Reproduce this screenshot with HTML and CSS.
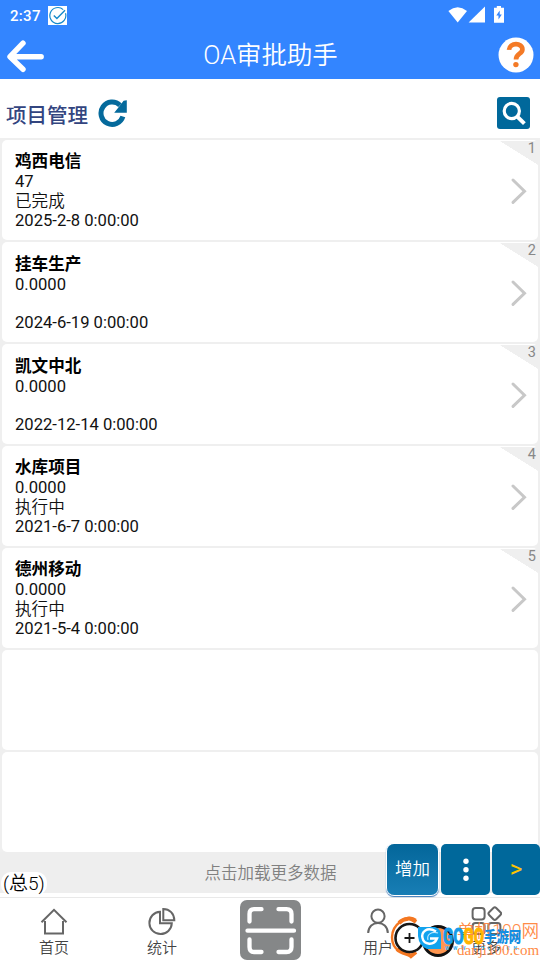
FILE: index.html
```html
<!DOCTYPE html>
<html lang="zh-CN">
<head>
    <meta charset="UTF-8">
    <meta name="viewport" content="width=device-width, initial-scale=1.0">
    <title>OA审批助手</title>
    <link rel="stylesheet" href="styles.css">
</head>
<body>
    <div class="app">
        <header class="header">
            <div class="status-bar">
                <span class="time">2:37</span>
                <svg class="app-badge" width="19" height="19" viewBox="0 0 19 19" fill="none" stroke="#168acb">
                    <rect width="19" height="19" fill="#fff" stroke="none"/>
                    <path d="M17.5 7.2A8 8 0 1 1 15.2 3.6" stroke-width="1.2"/>
                    <path d="M5.8 9.5l3.1 3L17 4.3" stroke-width="1.4"/>
                </svg>
                <svg class="signals" width="58" height="18" viewBox="0 0 58 18" fill="#fff">
                    <path d="M1.4 5Q10.7 -2.4 20 5L10.7 16.4z"/>
                    <path d="M38 .5V16.6H21.6z"/>
                    <path d="M47 1.7h2.8V0h4.2v1.7H57v15.1H47V2.7z"/>
                    <path d="M52.700 4.600l-3.400 5h2.200v4l3.300-5.200h-2.100z" fill="#3385ff"/>
                </svg>
            </div>
            <div class="title-bar">
                <svg class="back" width="38" height="34" viewBox="0 0 38 34" fill="none" stroke="#fff" stroke-width="5.4" stroke-linecap="round" stroke-linejoin="round">
                    <path d="M16 3.2L3 16.7 16 29.3M3.5 16.7h30.7"/>
                </svg>
                <h1>OA审批助手</h1>
                <svg class="help" width="36" height="36" viewBox="0 0 36 36">
                    <circle cx="18" cy="18" r="17.5" fill="#fff"/>
                    <path d="M11 12.9C11.6 5.4 24.4 5.4 24.4 12.4C24.4 17 18 16.6 18 22.6" fill="none" stroke="#f47a26" stroke-width="4.7"/>
                    <circle cx="17.9" cy="27.6" r="2.7" fill="#f47a26"/>
                </svg>
            </div>
        </header>

        <div class="toolbar">
            <h2>项目管理</h2>
            <svg class="refresh" width="30" height="30" viewBox="0 0 30 30" fill="none">
                <path d="M22 7.2A11.2 11.2 0 1 0 24.900 18.600" stroke="#056a9c" stroke-width="5"/>
                <path d="M28.800 2.300v12.400H16.200l3.400-4.200 6-7.700z" fill="#056a9c"/>
            </svg>
            <button class="search">
                <svg width="33" height="32" viewBox="0 0 33 32" fill="none" stroke="#fff">
                    <circle cx="14.8" cy="14" r="7.6" stroke-width="3.2"/>
                    <path d="M20 19.4l7.4 7.2" stroke-width="4"/>
                </svg>
            </button>
        </div>

        <main class="list">
            <div class="card">
                <div class="name">鸡西电信</div>
                <div class="line">47</div>
                <div class="line state">已完成</div>
                <div class="line">2025-2-8 0:00:00</div>
                <span class="corner"><b>1</b></span>
                <svg class="arrow" width="18" height="28" viewBox="0 0 18 28"><path d="M3 3l11.5 11.2L3 25.4"/></svg>
            </div>
            <div class="card empty-state">
                <div class="name">挂车生产</div>
                <div class="line">0.0000</div>
                <div class="line state"></div>
                <div class="line">2024-6-19 0:00:00</div>
                <span class="corner"><b>2</b></span>
                <svg class="arrow" width="18" height="28" viewBox="0 0 18 28"><path d="M3 3l11.5 11.2L3 25.4"/></svg>
            </div>
            <div class="card empty-state">
                <div class="name">凯文中北</div>
                <div class="line">0.0000</div>
                <div class="line state"></div>
                <div class="line">2022-12-14 0:00:00</div>
                <span class="corner"><b>3</b></span>
                <svg class="arrow" width="18" height="28" viewBox="0 0 18 28"><path d="M3 3l11.5 11.2L3 25.4"/></svg>
            </div>
            <div class="card">
                <div class="name">水库项目</div>
                <div class="line">0.0000</div>
                <div class="line state">执行中</div>
                <div class="line">2021-6-7 0:00:00</div>
                <span class="corner"><b>4</b></span>
                <svg class="arrow" width="18" height="28" viewBox="0 0 18 28"><path d="M3 3l11.5 11.2L3 25.4"/></svg>
            </div>
            <div class="card">
                <div class="name">德州移动</div>
                <div class="line">0.0000</div>
                <div class="line state">执行中</div>
                <div class="line">2021-5-4 0:00:00</div>
                <span class="corner"><b>5</b></span>
                <svg class="arrow" width="18" height="28" viewBox="0 0 18 28"><path d="M3 3l11.5 11.2L3 25.4"/></svg>
            </div>
            <div class="card"></div>
            <div class="card"></div>
        </main>

        <div class="load-more">点击加载更多数据</div>
        <div class="total">(总5)</div>

        <div class="actions">
            <button class="action add">增加</button>
            <button class="action">
                <svg width="8" height="24" viewBox="0 0 8 24" fill="#fff">
                    <circle cx="4" cy="3.3" r="2.7"/><circle cx="4" cy="11.8" r="2.7"/><circle cx="4" cy="20.2" r="2.7"/>
                </svg>
            </button>
            <button class="action next">&gt;</button>
        </div>

        <nav class="tabs">
            <a class="tab">
                <svg width="28" height="28" viewBox="0 0 28 28"><path d="M1.5 14.2L14 1.8l12.5 12.4M5 13v12.4h18V13"/></svg>
                <span>首页</span>
            </a>
            <a class="tab">
                <svg width="28" height="28" viewBox="0 0 28 28"><path d="M12 3.7A11.2 11.2 0 1 0 23.8 15.3H12z"/><path d="M15.3 1v11.3h11C26.3 5.6 21.5 1 15.3 1z"/></svg>
                <span>统计</span>
            </a>
            <a class="scan">
                <svg width="61" height="60" viewBox="0 0 61 60" fill="none" stroke="#fff" stroke-width="4.3" stroke-linecap="round">
                    <path d="M9.5 21.5V14Q9.5 9.2 14 9.2h7.5M38.5 9.2h8q5 0 5 4.8v7.5M9.5 39.5v7.5q0 5 4.5 5h7.5M38.5 52h8q5 0 5-5v-7.5M7.500 30.700h46.500"/>
                </svg>
            </a>
            <a class="tab">
                <svg width="28" height="28" viewBox="0 0 28 28"><circle cx="14" cy="8.2" r="6.6"/><path d="M4.2 25C4.2 11.5 23.8 11.5 23.8 25"/></svg>
                <span>用户</span>
            </a>
            <a class="tab">
                <svg class="more" width="32" height="30" viewBox="0 0 32 30"><rect x="2.6" y="3" width="12" height="11.6" rx="3"/><rect x="19.8" y="3.6" width="10" height="10" rx="2" transform="rotate(45 24.8 8.6)"/><rect x="2.6" y="18" width="12" height="11" rx="3"/><rect x="18.4" y="18" width="12" height="11" rx="3"/></svg>
                <span>更多</span>
            </a>
        </nav>

        <!-- site marks over the tab bar -->
        <div class="marks">
            <span class="danji">单机100网</span>
            <svg class="mark-logo" width="66" height="46" viewBox="0 0 66 46" fill="none">
                <path d="M26 6C21 2 15 4 10 8C-1 16 0 31 9 37" stroke="#f47721" stroke-width="2.4"/>
                <path d="M9 9C13 5 16 5 17 5C19 4 22 5 26 8M7 35C12 40 18 39 21 42L26 38" stroke="#f47721" stroke-width="4"/>
                <circle cx="48" cy="27" r="14.5" fill="#ff9650" stroke="#111" stroke-width="3"/>
                <circle cx="19.5" cy="24" r="14" fill="#fff" stroke="#171717" stroke-width="2.6"/>
                <path d="M14.5 24h10M19.5 19v10" stroke="#171717" stroke-width="1.8"/>
                <path d="M28 13h17q6 2 6 8v14H37Q29 32 28 22z" fill="#12a3ee"/>
                <path d="M46 17.5C37 12 31 18 32.5 24C34 31 44 32 47 24.5H40" stroke="#fff" stroke-width="2.4"/>
                <path d="M48 19C41 17 36.5 21 38 26" stroke="#b6e6ff" stroke-width="1.2"/>
            </svg>
            <span class="gogo"><b>GO</b><b class="gold">GO</b></span>
            <span class="game">手游网</span>
            <span class="www">WWW.GOGO.CN</span>
            <span class="domain">danji100.com</span>
        </div>
    </div>
</body>
</html>
```
FILE: styles.css
```css
* {
    box-sizing: border-box;
}
body {
    margin: 0;
    font-family: Roboto, "Noto Sans CJK SC", sans-serif;
    background: #fff;
    color: #111;
}
h1, h2 {
    margin: 0;
}
svg {
    display: block;
}
button {
    border: 0;
    padding: 0;
    font-family: inherit;
}
.app {
    position: relative;
    display: flex;
    flex-direction: column;
    width: 540px;
    height: 960px;
    overflow: hidden;
}

/* header */
.header {
    height: 79px;
    background: #3385ff;
    color: #fff;
}
.status-bar {
    display: flex;
    align-items: center;
    height: 31px;
    padding: 0 35px 0 10px;
}
.time {
    width: 38px;
    font-size: 15px;
    font-weight: 500;
    letter-spacing: 0.3px;
}
.signals {
    margin-left: auto;
    margin-top: -2px;
}
.title-bar {
    display: flex;
    align-items: center;
    justify-content: space-between;
    height: 48px;
    padding: 0 6px 0 7px;
}
.back {
    margin-top: 3px;
}
.title-bar h1 {
    margin-left: -2px;
    font-size: 25.4px;
    font-weight: 350;
    line-height: 44px;
    white-space: nowrap;
}

/* toolbar */
.toolbar {
    display: flex;
    align-items: center;
    height: 59px;
    padding: 9px 10px 0 6px;
}
.toolbar h2 {
    width: 92px;
    padding-top: 1px;
    font-size: 20.5px;
    font-weight: 500;
    color: #33457f;
    white-space: nowrap;
}
.search {
    margin-left: auto;
    width: 33px;
    height: 32px;
    border-radius: 3px;
    background: #00689b;
}

/* list */
.list {
    display: flex;
    flex-direction: column;
    gap: 2px;
    padding: 2px 2px 0;
    background: #efefef;
}
.card {
    position: relative;
    height: 100px;
    padding: 12px 13px 0;
    border-radius: 5px;
    background: #fff;
    font-size: 16.6px;
}
.name {
    height: 20px;
    line-height: 20px;
    font-weight: 700;
    color: #000;
}
.line {
    height: 20px;
    line-height: 20px;
}
.state {
    height: 19px;
    font-weight: 350;
}
.empty-state {
    padding-top: 13px;
}
.empty-state .state {
    height: 18px;
}
.corner {
    position: absolute;
    top: 1px;
    right: -2px;
    width: 40px;
    height: 25px;
    background: linear-gradient(to bottom left, #efefef 50%, transparent 50.5%);
    text-align: right;
}
.corner b {
    display: block;
    padding-right: 4px;
    font-size: 14.5px;
    font-weight: 400;
    line-height: 16px;
    color: #888;
}
.arrow {
    position: absolute;
    top: 37px;
    right: 10px;
    fill: none;
    stroke: #c8c8c8;
    stroke-width: 3;
    stroke-linecap: round;
}
.load-more {
    height: 41px;
    padding-left: 1px;
    background: #eee;
    color: #808080;
    font-size: 16.5px;
    font-weight: 350;
    line-height: 43px;
    text-align: center;
}
.total {
    position: absolute;
    left: 1px;
    top: 872px;
    padding: 0 2px;
    border-radius: 10px;
    background: #fff;
    font-size: 19px;
    font-weight: 350;
    line-height: 23px;
    color: #000;
}

/* floating buttons */
.actions {
    position: absolute;
    top: 844px;
    right: 0;
    display: flex;
    gap: 2px;
}
.action {
    display: flex;
    align-items: center;
    justify-content: center;
    width: 49px;
    height: 51px;
    border-radius: 5px;
    background: #00689b;
    color: #fff;
}
.action.add {
    width: 51px;
    margin-right: 1px;
    padding-bottom: 4px;
    border-radius: 7px;
    background: linear-gradient(#03669a, #187eb5);
    box-shadow: 0 0 0 1px #fff, 0 1px 1px 1px #3b78b8;
    font-size: 17.5px;
    font-weight: 350;
}
.action.next {
    width: 48px;
    padding-bottom: 2px;
    color: #ffc400;
    font-size: 24px;
    font-weight: 400;
}

/* bottom tabs */
.tabs {
    display: flex;
    height: 63px;
    margin-top: 4px;
    border-top: 1px solid #e9e9e9;
}
.tab {
    display: flex;
    flex-direction: column;
    align-items: center;
    width: 108px;
    padding-top: 10px;
    color: #444;
    font-size: 15px;
    font-weight: 350;
    line-height: 24px;
}
.tab svg {
    fill: none;
    stroke: #666;
    stroke-width: 2;
}
.tab .more {
    margin: -3px 0 1px;
}
.scan {
    width: 61px;
    height: 60px;
    margin: 2px 23px 0 24px;
    border-radius: 7px;
    background: #858788;
}

/* marks */
.marks span {
    position: absolute;
    white-space: nowrap;
}
.mark-logo {
    position: absolute;
    left: 390px;
    top: 914px;
}
.marks .danji {
    left: 457px;
    top: 919px;
    color: #ff8b47;
    font-size: 17.6px;
    line-height: 24px;
    font-weight: 350;
}
.marks .gogo {
    left: 443px;
    top: 925px;
    display: flex;
    color: #159be8;
    font-size: 22px;
    line-height: 24px;
    transform: scaleX(0.68);
    transform-origin: left;
    -webkit-text-stroke: 1.2px currentColor;
}
.gogo .gold {
    color: #ffb400;
}
.marks .game {
    left: 484px;
    top: 927px;
    color: #148de0;
    font-size: 12.4px;
    font-weight: 900;
    line-height: 20px;
    transform: scaleY(1.15);
}
.marks .www {
    left: 445px;
    top: 945px;
    color: #35aef0;
    font-size: 5px;
    font-weight: 700;
    line-height: 7px;
    letter-spacing: 3.6px;
}
.marks .domain {
    left: 457px;
    top: 941px;
    color: #ff8b47;
    font-family: "Liberation Serif", serif;
    font-size: 15px;
    line-height: 18px;
}
```
